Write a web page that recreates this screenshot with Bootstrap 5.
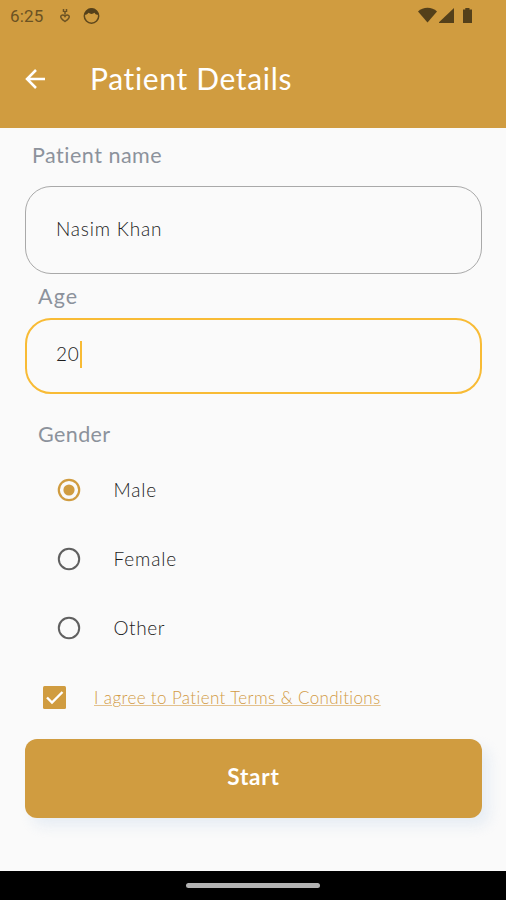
<!DOCTYPE html>
<html lang="en">
<head>
<meta charset="utf-8">
<meta name="viewport" content="width=device-width, initial-scale=1">
<title>Patient Details</title>
<link href="https://cdn.jsdelivr.net/npm/bootstrap@5.3.0/dist/css/bootstrap.min.css" rel="stylesheet">
<style>
:root{--gold:#d09c40;--ink:#1c1c1c;--label:#8c929c}
body{font-family:Lato,"Open Sans",sans-serif;background:#fafafa;color:var(--ink);height:900px;overflow:hidden}
svg{display:block;flex:none}
.top-area{background:var(--gold);height:128px}
.status{height:32px;padding:0 32px 0 10px;color:#6b5223;font:17px/32px Roboto,sans-serif}
.time{letter-spacing:.2px;margin-right:15px}
.bar{height:94px;padding-left:24px}
.bar h1{font-size:30px;line-height:36px;letter-spacing:.65px;margin:0 0 2px 44px}
.screen{padding:0 24px 0 25px}
.field-label{color:var(--label);font-size:21.5px;line-height:28px;letter-spacing:.5px;padding-left:13px}
.label-name{padding:13px 0 0 7px;margin-bottom:17px}
.label-age{margin:8px 0 8px;letter-spacing:1.1px}
.label-gender{margin:26px 0 7px;letter-spacing:.4px}
.field{border:1px solid #a9a9a9;border-radius:26px;padding-left:30px;font-size:19px;letter-spacing:.8px;font-weight:300}
.field-name{height:88px;padding-bottom:2px}
.field-age{height:76px;border:2.5px solid #f8bb35;padding:0 0 3px 29px;letter-spacing:.8px}
.caret{width:2px;height:27px;background:#f8bb35}
.choice{height:69px;padding-left:32px;font-size:19px;letter-spacing:.85px;font-weight:300}
.choice span{margin-left:32.5px;padding-top:1px}
.choice:nth-last-of-type(2) span{letter-spacing:.6px}
.agree{height:70px;padding-left:18px}
.agree a{color:#d29a45;font-size:17px;font-weight:300;letter-spacing:.38px;text-decoration-thickness:1px;text-underline-offset:1px;text-decoration-color:#e3c18d;margin-left:28px;padding-top:1px}
.start{--bs-btn-color:#fff;--bs-btn-bg:var(--gold);--bs-btn-border-width:0;--bs-btn-border-radius:12px;--bs-btn-hover-bg:#bd8b34;--bs-btn-hover-color:#fff;height:79.5px;padding-bottom:8px;font-size:22.5px;font-weight:700;letter-spacing:.8px;margin-top:6.5px;box-shadow:7px 8px 13px #dbe4f099}
.navstrip{height:29px}
.pill{width:134px;height:5px;background:#b2b2b2}
</style>
<script src="https://cdn.jsdelivr.net/npm/bootstrap@5.3.0/dist/js/bootstrap.bundle.min.js"></script>
</head>
<body class="d-flex flex-column">
<header class="top-area flex-shrink-0">
  <div class="status d-flex align-items-center">
    <span class="time">6:25</span>
    <svg width="12" height="16" viewBox="0 0 12 16" fill="none" stroke="#6b5223" stroke-width="1.5"><path d="M4.500 1v3M7.500 1v3M6 3v3.500M1.800 8.200c1-1.700 3.200-1.500 4.200.3 1-1.800 3.200-2 4.200-.3.700 2-1.500 3.500-4.200 5.300C3.300 11.700 1.100 10.200 1.800 8.200Z"/></svg>
    <svg width="40" height="18" viewBox="0 0 40 18"><circle cx="20.500" cy="9" r="7.200" fill="none" stroke="#5f481c" stroke-width="1.500"/><path d="M13.500 7.500c2 .7 3-.4 4-1.700 1.500 1.500 4.500 1.500 6 0 .8 1.500 2 2.300 4 1.700-.8-3.500-3.500-6-7-6s-6.200 2.500-7 6Z" fill="#54401a"/></svg>
    <svg class="ms-auto" width="56" height="18" viewBox="0 0 56 18" fill="#54401a"><path d="M0 4.500C5-.5 14-.5 19 4.500L9.500 15.500Z"/><path d="M21 16V15.300L36 1V16Z"/><path d="M45 2.500h2.300V1h4.200v1.500H54V16h-9Z"/></svg>
  </div>
  <div class="bar d-flex align-items-center text-white">
    <svg width="22" height="22" viewBox="0 0 22 22" fill="none" stroke="#fff" stroke-width="2.500"><path d="M21 11H3M12 2 3 11l9 9"/></svg>
    <h1 class="fw-normal">Patient Details</h1>
  </div>
</header>
<main class="screen flex-grow-1">
  <div class="field-label label-name">Patient name</div>
  <div class="field field-name d-flex align-items-center">Nasim Khan</div>
  <div class="field-label label-age">Age</div>
  <div class="field field-age d-flex align-items-center"><span>20</span><i class="caret"></i></div>
  <div class="field-label label-gender">Gender</div>
  <div class="choice d-flex align-items-center"><svg width="24" height="24" viewBox="0 0 24 24"><circle cx="12" cy="12" r="10.200" fill="none" stroke="#d09c40" stroke-width="2.200"/><circle cx="12" cy="12" r="5.600" fill="#d09c40"/></svg><span>Male</span></div>
  <div class="choice d-flex align-items-center"><svg width="24" height="24" viewBox="0 0 24 24"><circle cx="12" cy="12" r="10.200" fill="none" stroke="#606060" stroke-width="2"/></svg><span>Female</span></div>
  <div class="choice d-flex align-items-center"><svg width="24" height="24" viewBox="0 0 24 24"><circle cx="12" cy="12" r="10.200" fill="none" stroke="#606060" stroke-width="2"/></svg><span>Other</span></div>
  <div class="agree d-flex align-items-center"><svg width="23" height="23" viewBox="0 0 23 23"><rect width="23" height="23" rx="1.500" fill="#d09c40"/><path d="m4 11.500 5 5L19.500 6" fill="none" stroke="#fff" stroke-width="2.400"/></svg><a href="#">I agree to Patient Terms &amp; Conditions</a></div>
  <button class="btn start w-100" type="button">Start</button>
</main>
<footer class="navstrip bg-black d-flex align-items-center justify-content-center flex-shrink-0"><div class="pill rounded-pill"></div></footer>
</body>
</html>
